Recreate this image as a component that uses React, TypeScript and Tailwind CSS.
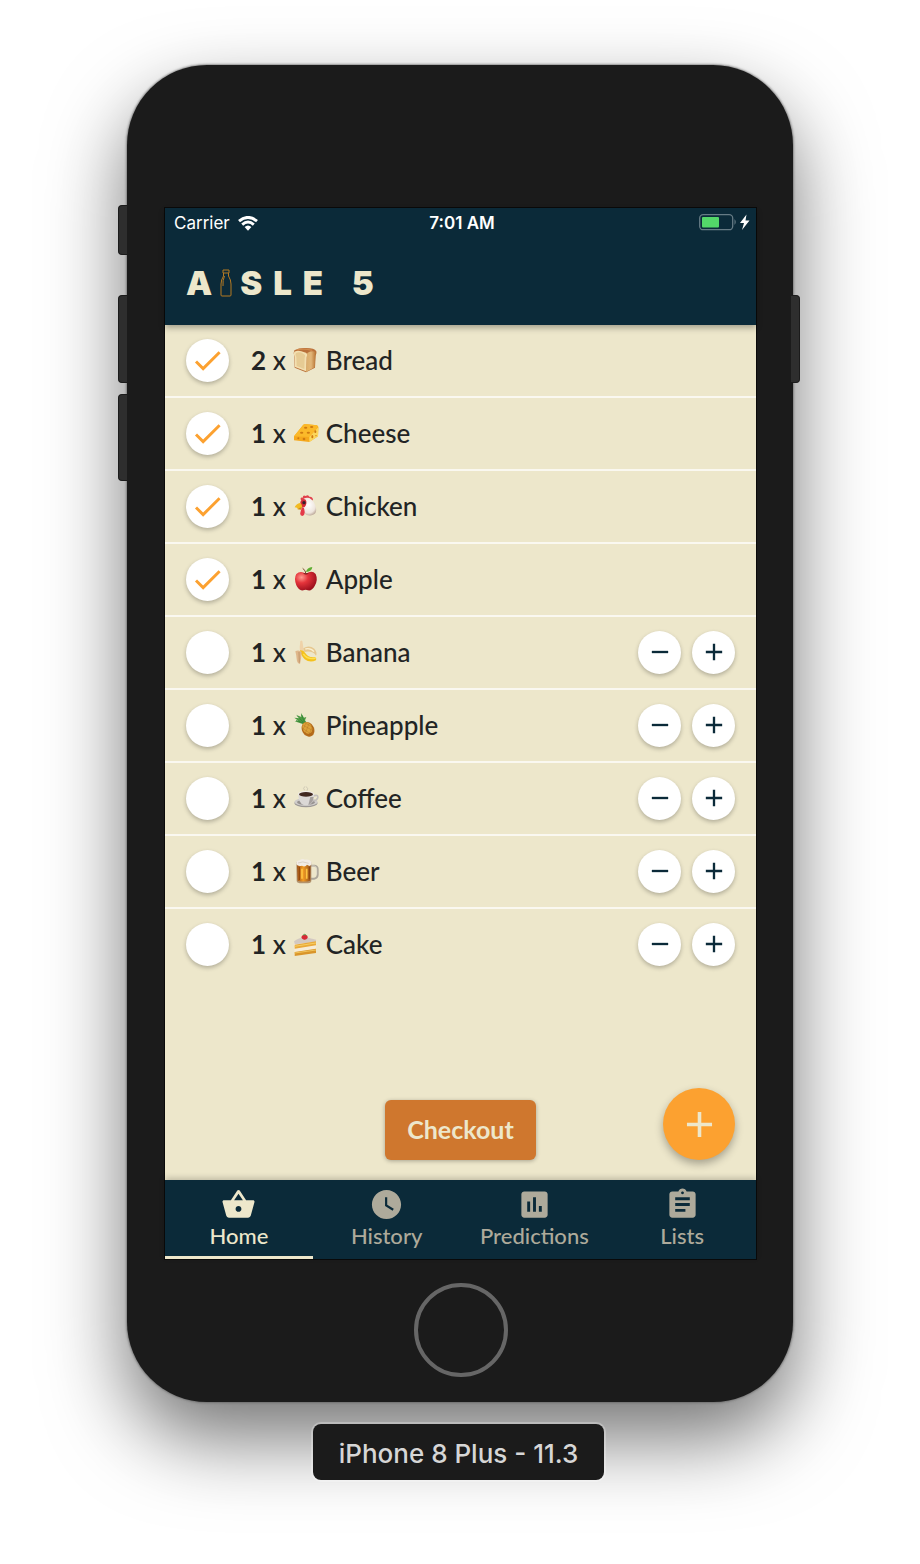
import { useState } from "react";
import type { ReactNode } from "react";
import {
  MdAdd,
  MdAssessment,
  MdAssignment,
  MdCheck,
  MdRemove,
  MdShoppingBasket,
  MdWatchLater,
} from "react-icons/md";

type Item = { name: string; qty: number; done: boolean; art: ReactNode };

const bread = (
  <>
    <defs>
      <linearGradient id="breadSide" x1="0" x2="1">
        <stop offset="0" stopColor="#d9ad6c" />
        <stop offset="0.5" stopColor="#e2b679" />
        <stop offset="1" stopColor="#b5702f" />
      </linearGradient>
    </defs>
    <path d="M4 10Q20 1 40 3Q64 3 70 13Q72 20 68 25L66 62L39 76L5 62L4 28Q0 18 4 10Z" fill="#b9703a" />
    <path d="M44 17Q56 10 68 14Q71 20 67 26L65 61L39 75L41 30Q38 23 44 17Z" fill="url(#breadSide)" />
    <path d="M4 14Q18 8 34 16Q46 18 41 31L39 73L6 60L5 29Q0 20 4 14Z" fill="#f3dfb0" />
    <path d="M9 18Q20 13 31 20Q39 23 35 32L34 66L11 57L10 30Q5 23 9 18Z" fill="#e6cb94" />
    <path d="M12 9Q30 3 58 10" fill="none" stroke="#d18b4d" strokeWidth="4" />
  </>
);

const cheese = (
  <>
    <path d="M3 49L31 14Q36 10 42 13L72 16Q78 19 76 27L75 49L49 66L3 61Z" fill="#f6a81c" />
    <path d="M3 49L31 14Q36 10 42 13L72 16Q77 19 72 24L49 51Z" fill="#fbb92a" />
    <path d="M49 51L76 21L75 49L49 66Z" fill="#fcd65a" />
    <g fill="#cf7a10">
      <ellipse cx="38" cy="23" rx="5" ry="3" />
      <ellipse cx="56" cy="21" rx="5" ry="3" />
      <ellipse cx="26" cy="38" rx="5" ry="3" />
      <ellipse cx="46" cy="38" rx="5" ry="3" />
      <circle cx="16" cy="55" r="3" />
      <circle cx="33" cy="57" r="4" />
      <ellipse cx="58" cy="50" rx="3" ry="5" />
      <ellipse cx="67" cy="35" rx="3" ry="4" />
      <circle cx="69" cy="47" r="2" />
    </g>
  </>
);

const chicken = (
  <>
    <defs>
      <radialGradient id="hen" cx="0.5" cy="0.4" r="0.65">
        <stop offset="0" stopColor="#ffffff" />
        <stop offset="0.7" stopColor="#eee5dc" />
        <stop offset="1" stopColor="#b5a090" />
      </radialGradient>
    </defs>
    <path d="M24 22Q20 12 29 14Q30 4 38 9Q46 3 49 11Q60 10 60 22L44 25Z" fill="#e1414c" />
    <path d="M26 24Q34 11 49 15Q65 23 69 46Q72 62 58 66Q43 71 35 61Q30 46 24 40Z" fill="url(#hen)" />
    <path d="M22 27Q27 14 38 20Q44 30 35 42Q28 45 23 38Z" fill="#d52d38" />
    <circle cx="33" cy="29" r="5" fill="#38222a" />
    <path d="M20 30Q8 34 5 43Q14 43 14 49Q23 48 28 42Q27 32 20 30Z" fill="#f2bb22" />
    <path d="M14 49Q20 43 27 43L24 50Z" fill="#c98716" />
    <path d="M27 43Q34 41 34 51Q38 66 28 69Q20 68 22 59Q24 51 27 43Z" fill="#e43a49" />
  </>
);

const apple = (
  <>
    <defs>
      <radialGradient id="apple" cx="0.3" cy="0.3" r="0.75">
        <stop offset="0" stopColor="#ff9a8f" />
        <stop offset="0.4" stopColor="#e5343b" />
        <stop offset="1" stopColor="#9c0f1d" />
      </radialGradient>
    </defs>
    <path d="M39 23Q57 11 68 24Q76 42 65 60Q56 76 45 73Q38 70 31 73Q18 76 10 58Q2 37 10 24Q22 12 39 23Z" fill="url(#apple)" />
    <path d="M30 22Q39 29 48 22Q39 20 30 22Z" fill="#8c1820" />
    <path d="M39 25Q38 12 29 7" fill="none" stroke="#79492b" strokeWidth="3" />
    <path d="M39 18Q42 4 58 3Q57 16 39 18Z" fill="#5fae32" />
  </>
);

const banana = (
  <>
    <path d="M22 6Q29 1 29 12L33 39L21 42Q19 22 22 6Z" fill="#efd2a8" />
    <path d="M31 28Q48 16 64 29Q74 41 69 50Q59 34 34 39Z" fill="#e6c78f" />
    <path d="M37 30Q53 26 63 38" fill="none" stroke="#fbf0cf" strokeWidth="4" />
    <path d="M21 34Q31 33 36 41Q48 58 66 54Q72 58 69 64Q51 73 35 61Q24 51 21 34Z" fill="#f4c11c" />
    <path d="M31 45Q45 64 68 57" fill="none" stroke="#ffe04f" strokeWidth="4" />
    <path d="M7 37Q17 31 26 39Q25 59 21 75Q12 73 11 60Q10 47 7 37Z" fill="#dfb78a" />
    <path d="M18 39L19 71" stroke="#c2956a" strokeWidth="3" />
  </>
);

const pineapple = (
  <>
    <path d="M29 36L5 28L16 26L4 17L20 19L9 8L25 15L24 3L33 17L40 15L36 25L42 33Z" fill="#4b9b40" />
    <path d="M13 12L31 31M26 9L34 30M9 25L31 33" stroke="#2f7a38" strokeWidth="2" />
    <ellipse cx="45" cy="52" rx="18" ry="23" transform="rotate(-28 45 52)" fill="#b56c1a" />
    <ellipse cx="43" cy="48" rx="14" ry="18" transform="rotate(-28 43 48)" fill="#dda238" />
    <path d="M27 48L57 68M31 40L63 58M38 34L64 48M36 66L48 35M47 73L58 42M28 57L39 33" stroke="#a8631b" strokeWidth="1" />
  </>
);

const coffee = (
  <>
    <ellipse cx="39" cy="54" rx="35" ry="13" fill="#9c9896" />
    <ellipse cx="39" cy="51" rx="35" ry="12" fill="#cfccca" />
    <ellipse cx="39" cy="52" rx="27" ry="8" fill="#96918f" />
    <path d="M60 33Q77 27 74 39Q70 49 56 47" fill="none" stroke="#c2bebc" strokeWidth="5" />
    <path d="M16 27H63Q63 57 46 60H32Q16 54 16 27Z" fill="#dbd8d6" />
    <path d="M52 36H62Q60 55 46 60Z" fill="#a5a09e" />
    <ellipse cx="39" cy="27" rx="24" ry="9" fill="#eeecea" />
    <ellipse cx="39" cy="28" rx="21" ry="7" fill="#402820" />
    <path d="M35 16Q28 10 36 4M42 17Q48 9 39 5" fill="none" stroke="#cfc9b5" strokeWidth="3" />
  </>
);

const beer = (
  <>
    <defs>
      <linearGradient id="beer" x1="0" x2="1">
        <stop offset="0" stopColor="#9b5017" />
        <stop offset="0.45" stopColor="#f39b22" />
        <stop offset="1" stopColor="#91501f" />
      </linearGradient>
    </defs>
    <path d="M53 23H65Q74 24 74 34V50Q74 60 63 62H54" fill="none" stroke="#aca69a" strokeWidth="6" />
    <path d="M55 24H64Q71 25 71 34V50" fill="none" stroke="#e8e3d5" strokeWidth="2" />
    <path d="M10 13H55V70Q54 76 45 76H20Q11 75 11 70Z" fill="#b3936c" />
    <path d="M12 19H53L52 68Q33 73 14 68Z" fill="url(#beer)" />
    <path d="M27 32V62M41 32V62" stroke="#ffc341" strokeWidth="5" />
    <path d="M19 27V66M49 27V64" stroke="#8d430d" strokeWidth="3" />
    <path d="M10 19Q8 9 20 7Q28 0 36 5Q51 3 56 14Q57 21 49 24L42 20Q36 29 27 23Q15 27 10 19Z" fill="#f2ece4" />
    <path d="M15 15Q28 8 47 16" fill="none" stroke="#cec3b6" strokeWidth="2" />
  </>
);

const cake = (
  <>
    <path d="M3 32L35 18L70 26L69 65L5 75Z" fill="#f7ecd6" />
    <path d="M3 31Q16 20 37 18L70 26L68 33L5 40Z" fill="#d3c9c1" />
    <path d="M5 41L69 31V43L5 53Z" fill="#e9a93a" />
    <path d="M5 46L69 36" stroke="#f7cf62" strokeWidth="3" />
    <path d="M5 63L69 53V66L5 75Z" fill="#d9952a" />
    <path d="M5 66L69 57" stroke="#f1c459" strokeWidth="3" />
    <path d="M25 19Q27 10 35 12Q45 10 44 21Q39 28 33 26Q26 25 25 19Z" fill="#d82935" />
    <path d="M30 13L35 10L40 13" fill="none" stroke="#4d9241" strokeWidth="3" />
  </>
);

const initialItems: Item[] = [
  { name: "Bread", qty: 2, done: true, art: bread },
  { name: "Cheese", qty: 1, done: true, art: cheese },
  { name: "Chicken", qty: 1, done: true, art: chicken },
  { name: "Apple", qty: 1, done: true, art: apple },
  { name: "Banana", qty: 1, done: false, art: banana },
  { name: "Pineapple", qty: 1, done: false, art: pineapple },
  { name: "Coffee", qty: 1, done: false, art: coffee },
  { name: "Beer", qty: 1, done: false, art: beer },
  { name: "Cake", qty: 1, done: false, art: cake },
];

const tabs = [
  { name: "Home", icon: MdShoppingBasket },
  { name: "History", icon: MdWatchLater },
  { name: "Predictions", icon: MdAssessment },
  { name: "Lists", icon: MdAssignment },
];

function StatusBar() {
  return (
    <div className="grid h-[30px] grid-cols-3 items-center pr-[6px] pl-[9px] font-['Inter',sans-serif] text-[17px] text-white">
      <div className="flex items-center gap-2 pt-0.5">
        <span>Carrier</span>
        <svg className="mb-0.5" width="20" height="15" viewBox="0 0 20 15" aria-hidden="true">
          <path d="M1 5.200Q10-2.400 19 5.200M4.200 8.600Q10 3.600 15.800 8.600" fill="none" stroke="#fff" strokeWidth="2.900" />
          <path d="M6.600 11Q10 8 13.400 11L10 14.700Z" fill="#fff" />
        </svg>
      </div>
      <span className="pt-0.5 text-center font-semibold">7:01 AM</span>
      <svg className="justify-self-end" width="51" height="18" viewBox="0 0 51 18" aria-label="Battery charging">
        <rect x="0.700" y="0.700" width="33" height="15" rx="3.500" fill="none" stroke="#667b85" strokeWidth="1.300" />
        <rect x="3" y="3" width="17" height="10.500" rx="1" fill="#53d769" />
        <path d="M35.500 5Q38 8 35.500 11Z" fill="#667b85" />
        <path d="M47.500 0.500L41 9H45L43 16L50.500 6.500H46.500Z" fill="#fff" />
      </svg>
    </div>
  );
}

function Header() {
  return (
    <header className="relative z-10 h-[117px] bg-[#0b2a39] shadow-[0_3px_6px_rgba(0,0,0,0.3)]">
      <StatusBar />
      <h1 className="flex items-center px-[21px] pt-[25px] font-['Inter',sans-serif] text-[33px] leading-10 font-black text-[#ede7cb]">
        <span>A</span>
        <svg className="mx-2" width="12" height="28" viewBox="0 0 12 28" fill="none" stroke="#b67a22" strokeWidth="1" aria-label="I">
          <path d="M3 1H9V4H3ZM3.500 4V7Q1 11 1 15V26Q1 27 2 27H10Q11 27 11 26V15Q11 11 8.500 7V4M4.500 7Q2.500 11 3 17" />
        </svg>
        <span className="tracking-[11px]">SLE 5</span>
      </h1>
    </header>
  );
}

const roundButton =
  "grid size-[43px] place-items-center rounded-full bg-white text-[28px] text-[#0b2a39] shadow-[0_2px_4px_rgba(0,0,0,0.25)]";

export default function App() {
  const [items, setItems] = useState(initialItems);
  const [active, setActive] = useState("Home");

  const update = (name: string, change: (item: Item) => Item) =>
    setItems((list) => list.map((item) => (item.name === name ? change(item) : item)));

  return (
    <div className="flex min-h-screen flex-col items-center bg-white px-[120px] pt-[65px] pb-[84px] font-['Lato',sans-serif]">
      <div className="relative w-full max-w-[666px] rounded-[80px] bg-[#1b1b1b] pt-[143px] pr-[37px] pb-[25px] pl-[38px] shadow-[0_0_2px_1px_rgba(90,90,90,0.6),0_36px_80px_rgba(0,0,0,0.55)]">
        <div className="absolute top-[140px] -left-[9px] h-[50px] w-[9px] rounded-l-[4px] border border-r-0 border-[#1b1b1b] bg-[#2e2e2e]" />
        <div className="absolute top-[230px] -left-[9px] h-[88px] w-[9px] rounded-l-[4px] border border-r-0 border-[#1b1b1b] bg-[#2e2e2e]" />
        <div className="absolute top-[329px] -left-[9px] h-[87px] w-[9px] rounded-l-[4px] border border-r-0 border-[#1b1b1b] bg-[#2e2e2e]" />
        <div className="absolute top-[230px] -right-[7px] h-[88px] w-[9px] rounded-r-[4px] border border-l-0 border-[#1b1b1b] bg-[#2e2e2e]" />

        <div className="bg-[#ede7cb] shadow-[0_0_0_1px_#0a0a0a]">
          <Header />
          <main>
            <ul className="divide-y-2 divide-[#faf8f0]">
              {items.map((item) => (
                <li key={item.name} className="flex h-[73px] items-center gap-[11px] px-[21px] pb-px last:h-[71px]">
                  <label className="flex flex-1 items-center text-[26px] font-medium text-[#222424]">
                    <span className="relative mr-[22px] grid size-[43px] place-items-center">
                      <input
                        type="checkbox"
                        checked={item.done}
                        onChange={() => update(item.name, (i) => ({ ...i, done: !i.done }))}
                        className="size-[43px] appearance-none rounded-full bg-white shadow-[0_2px_4px_rgba(0,0,0,0.25)]"
                      />
                      {item.done && (
                        <MdCheck className="pointer-events-none absolute text-[35px] text-[#fca130]" />
                      )}
                    </span>
                    <span>
                      <b>{item.qty}</b> x
                    </span>
                    <svg className="mx-[7px]" width="26" height="26" viewBox="0 0 78 78" aria-hidden="true">
                      {item.art}
                    </svg>
                    <span>{item.name}</span>
                  </label>
                  {!item.done && (
                    <>
                      <button
                        type="button"
                        aria-label={`Remove one ${item.name}`}
                        className={roundButton}
                        onClick={() => update(item.name, (i) => ({ ...i, qty: Math.max(1, i.qty - 1) }))}
                      >
                        <MdRemove />
                      </button>
                      <button
                        type="button"
                        aria-label={`Add one ${item.name}`}
                        className={roundButton}
                        onClick={() => update(item.name, (i) => ({ ...i, qty: i.qty + 1 }))}
                      >
                        <MdAdd />
                      </button>
                    </>
                  )}
                </li>
              ))}
            </ul>
            <div className="grid grid-cols-[1fr_auto_1fr] items-end px-[21px] pt-[108px] pb-5">
              <button
                type="button"
                className="col-start-2 h-[60px] rounded-[6px] bg-[#cf772e] px-[22px] text-[25px] font-bold text-[#ede7cb] shadow-[0_1px_4px_rgba(0,0,0,0.3)]"
              >
                Checkout
              </button>
              <button
                type="button"
                aria-label="Add item"
                className="grid size-[72px] place-items-center justify-self-end rounded-full bg-[#fca130] text-[43px] text-[#ede7cb] shadow-[0_4px_8px_rgba(0,0,0,0.3)]"
              >
                <MdAdd />
              </button>
            </div>
          </main>
          <nav className="grid grid-cols-4 bg-[#0b2a39] text-[22px] font-medium shadow-[0_-2px_6px_rgba(0,0,0,0.2)]">
            {tabs.map(({ name, icon: Icon }) => (
              <a
                key={name}
                href={`#${name.toLowerCase()}`}
                onClick={() => setActive(name)}
                className={
                  active === name
                    ? "flex h-[79px] flex-col items-center border-b-[3px] border-[#ede7cb] pt-[7px] leading-7 text-[#ede7cb]"
                    : "flex h-[79px] flex-col items-center border-b-[3px] border-transparent pt-[7px] leading-7 text-[#aeaa9b]"
                }
              >
                <Icon className="text-[35px]" />
                <span>{name}</span>
              </a>
            ))}
          </nav>
        </div>

        <button
          type="button"
          aria-label="Home button"
          className="mx-auto mt-6 block size-[94px] rounded-full border-4 border-[#666666]"
        />
      </div>

      <div className="relative mt-[22px] mr-[3px] flex h-[56px] items-center rounded-[8px] bg-[#1b1b1b] px-[26px] pt-0.5 font-['Inter',sans-serif] text-[26px] font-medium text-[#d6d6d6] shadow-[0_0_0_2px_rgba(255,255,255,0.25)]">
        iPhone 8 Plus - 11.3
      </div>
    </div>
  );
}
